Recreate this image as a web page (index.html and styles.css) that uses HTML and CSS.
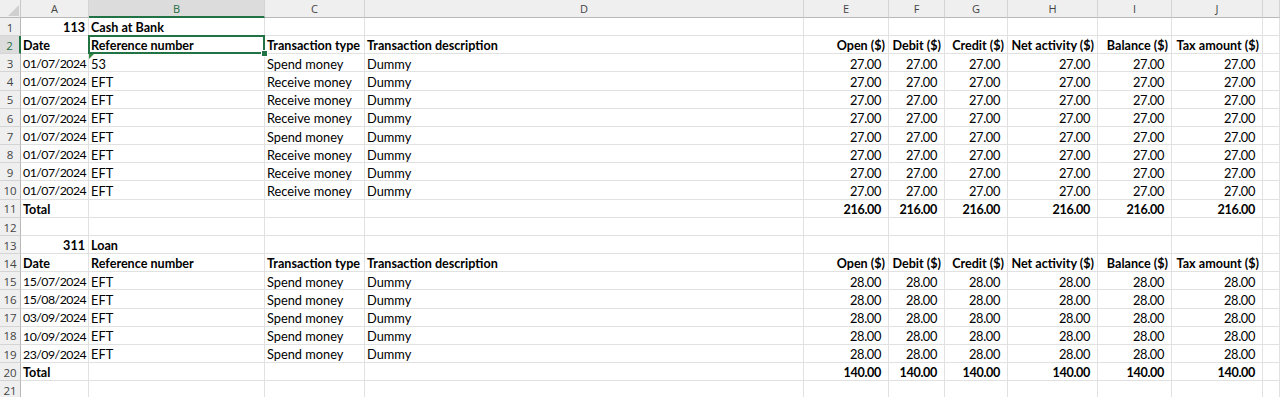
FILE: index.html
```html
<!DOCTYPE html>
<html>
<head>
<meta charset="utf-8">
<link rel="stylesheet" href="styles.css">
</head>
<body>
<div class="sheet">
  <div class="row hdr">
    <div class="corner"><svg width="12" height="12" viewBox="0 0 12 12"><polygon points="12,1 12,12 1,12" fill="#cfcfcf"/></svg></div>
    <div class="ch">A</div><div class="ch sel">B</div><div class="ch">C</div><div class="ch">D</div><div class="ch">E</div><div class="ch">F</div><div class="ch">G</div><div class="ch">H</div><div class="ch">I</div><div class="ch">J</div><div class="ch"></div>
  </div>

  <div class="row"><div class="rh">1</div><div class="c r b">113</div><div class="c b">Cash at Bank</div><div class="c"></div><div class="c"></div><div class="c"></div><div class="c"></div><div class="c"></div><div class="c"></div><div class="c"></div><div class="c"></div><div class="c"></div></div>
  <div class="row"><div class="rh rsel">2</div><div class="c b">Date</div><div class="c b active">Reference number</div><div class="c b">Transaction type</div><div class="c b">Transaction description</div><div class="c b r">Open ($)</div><div class="c b r">Debit ($)</div><div class="c b r">Credit ($)</div><div class="c b r">Net activity ($)</div><div class="c b r">Balance ($)</div><div class="c b r">Tax amount ($)</div><div class="c"></div></div>
  <div class="row"><div class="rh">3</div><div class="c d">01/07/2024</div><div class="c warn">53</div><div class="c">Spend money</div><div class="c">Dummy</div><div class="c n">27.00</div><div class="c n">27.00</div><div class="c n">27.00</div><div class="c n">27.00</div><div class="c n">27.00</div><div class="c n">27.00</div><div class="c"></div></div>
  <div class="row"><div class="rh">4</div><div class="c d">01/07/2024</div><div class="c">EFT</div><div class="c">Receive money</div><div class="c">Dummy</div><div class="c n">27.00</div><div class="c n">27.00</div><div class="c n">27.00</div><div class="c n">27.00</div><div class="c n">27.00</div><div class="c n">27.00</div><div class="c"></div></div>
  <div class="row"><div class="rh">5</div><div class="c d">01/07/2024</div><div class="c">EFT</div><div class="c">Receive money</div><div class="c">Dummy</div><div class="c n">27.00</div><div class="c n">27.00</div><div class="c n">27.00</div><div class="c n">27.00</div><div class="c n">27.00</div><div class="c n">27.00</div><div class="c"></div></div>
  <div class="row"><div class="rh">6</div><div class="c d">01/07/2024</div><div class="c">EFT</div><div class="c">Receive money</div><div class="c">Dummy</div><div class="c n">27.00</div><div class="c n">27.00</div><div class="c n">27.00</div><div class="c n">27.00</div><div class="c n">27.00</div><div class="c n">27.00</div><div class="c"></div></div>
  <div class="row"><div class="rh">7</div><div class="c d">01/07/2024</div><div class="c">EFT</div><div class="c">Spend money</div><div class="c">Dummy</div><div class="c n">27.00</div><div class="c n">27.00</div><div class="c n">27.00</div><div class="c n">27.00</div><div class="c n">27.00</div><div class="c n">27.00</div><div class="c"></div></div>
  <div class="row"><div class="rh">8</div><div class="c d">01/07/2024</div><div class="c">EFT</div><div class="c">Receive money</div><div class="c">Dummy</div><div class="c n">27.00</div><div class="c n">27.00</div><div class="c n">27.00</div><div class="c n">27.00</div><div class="c n">27.00</div><div class="c n">27.00</div><div class="c"></div></div>
  <div class="row"><div class="rh">9</div><div class="c d">01/07/2024</div><div class="c">EFT</div><div class="c">Receive money</div><div class="c">Dummy</div><div class="c n">27.00</div><div class="c n">27.00</div><div class="c n">27.00</div><div class="c n">27.00</div><div class="c n">27.00</div><div class="c n">27.00</div><div class="c"></div></div>
  <div class="row"><div class="rh">10</div><div class="c d">01/07/2024</div><div class="c">EFT</div><div class="c">Receive money</div><div class="c">Dummy</div><div class="c n">27.00</div><div class="c n">27.00</div><div class="c n">27.00</div><div class="c n">27.00</div><div class="c n">27.00</div><div class="c n">27.00</div><div class="c"></div></div>
  <div class="row"><div class="rh">11</div><div class="c b">Total</div><div class="c"></div><div class="c"></div><div class="c"></div><div class="c n b">216.00</div><div class="c n b">216.00</div><div class="c n b">216.00</div><div class="c n b">216.00</div><div class="c n b">216.00</div><div class="c n b">216.00</div><div class="c"></div></div>
  <div class="row"><div class="rh">12</div><div class="c"></div><div class="c"></div><div class="c"></div><div class="c"></div><div class="c"></div><div class="c"></div><div class="c"></div><div class="c"></div><div class="c"></div><div class="c"></div><div class="c"></div></div>
  <div class="row"><div class="rh">13</div><div class="c r b">311</div><div class="c b">Loan</div><div class="c"></div><div class="c"></div><div class="c"></div><div class="c"></div><div class="c"></div><div class="c"></div><div class="c"></div><div class="c"></div><div class="c"></div></div>
  <div class="row"><div class="rh">14</div><div class="c b">Date</div><div class="c b">Reference number</div><div class="c b">Transaction type</div><div class="c b">Transaction description</div><div class="c b r">Open ($)</div><div class="c b r">Debit ($)</div><div class="c b r">Credit ($)</div><div class="c b r">Net activity ($)</div><div class="c b r">Balance ($)</div><div class="c b r">Tax amount ($)</div><div class="c"></div></div>
  <div class="row"><div class="rh">15</div><div class="c d">15/07/2024</div><div class="c">EFT</div><div class="c">Spend money</div><div class="c">Dummy</div><div class="c n">28.00</div><div class="c n">28.00</div><div class="c n">28.00</div><div class="c n">28.00</div><div class="c n">28.00</div><div class="c n">28.00</div><div class="c"></div></div>
  <div class="row"><div class="rh">16</div><div class="c d">15/08/2024</div><div class="c">EFT</div><div class="c">Spend money</div><div class="c">Dummy</div><div class="c n">28.00</div><div class="c n">28.00</div><div class="c n">28.00</div><div class="c n">28.00</div><div class="c n">28.00</div><div class="c n">28.00</div><div class="c"></div></div>
  <div class="row"><div class="rh">17</div><div class="c d">03/09/2024</div><div class="c">EFT</div><div class="c">Spend money</div><div class="c">Dummy</div><div class="c n">28.00</div><div class="c n">28.00</div><div class="c n">28.00</div><div class="c n">28.00</div><div class="c n">28.00</div><div class="c n">28.00</div><div class="c"></div></div>
  <div class="row"><div class="rh">18</div><div class="c d">10/09/2024</div><div class="c">EFT</div><div class="c">Spend money</div><div class="c">Dummy</div><div class="c n">28.00</div><div class="c n">28.00</div><div class="c n">28.00</div><div class="c n">28.00</div><div class="c n">28.00</div><div class="c n">28.00</div><div class="c"></div></div>
  <div class="row"><div class="rh">19</div><div class="c d">23/09/2024</div><div class="c">EFT</div><div class="c">Spend money</div><div class="c">Dummy</div><div class="c n">28.00</div><div class="c n">28.00</div><div class="c n">28.00</div><div class="c n">28.00</div><div class="c n">28.00</div><div class="c n">28.00</div><div class="c"></div></div>
  <div class="row"><div class="rh">20</div><div class="c b">Total</div><div class="c"></div><div class="c"></div><div class="c"></div><div class="c n b">140.00</div><div class="c n b">140.00</div><div class="c n b">140.00</div><div class="c n b">140.00</div><div class="c n b">140.00</div><div class="c n b">140.00</div><div class="c"></div></div>
  <div class="row"><div class="rh">21</div><div class="c"></div><div class="c"></div><div class="c"></div><div class="c"></div><div class="c"></div><div class="c"></div><div class="c"></div><div class="c"></div><div class="c"></div><div class="c"></div><div class="c"></div></div>
</div>
</body>
</html>
```

FILE: styles.css
```css
html, body {
  margin: 0;
  padding: 0;
  background: #ffffff;
  overflow: hidden;
}
.sheet {
  font-family: Lato, "Open Sans", sans-serif;
  font-size: 12.8px;
  color: #000;
  width: 1280px;
}
.row {
  display: grid;
  grid-template-columns: 21px 68px 176px 100px 439px 85px 56px 63px 90px 74px 91px 1fr;
  height: 18.17px;
}
.row.hdr {
  height: 18px;
}
.corner {
  background: #efefef;
  border-right: 1px solid #c8c8c8;
  border-bottom: 1px solid #b8b8b8;
  box-sizing: border-box;
  display: flex;
  align-items: flex-end;
  justify-content: flex-end;
  padding: 0 1px 1px 0;
}
.corner svg {
  display: block;
}
.ch {
  background: #efefef;
  border-right: 1px solid #d4d4d4;
  border-bottom: 1px solid #b8b8b8;
  box-sizing: border-box;
  color: #444;
  font-family: "Open Sans", Lato, sans-serif;
  font-size: 11px;
  display: flex;
  align-items: center;
  justify-content: center;
  line-height: 1;
}
.ch.sel {
  background: #dcdcdc;
  color: #1e6e42;
  border-bottom: 2px solid #217346;
}
.rh {
  background: #efefef;
  border-right: 1px solid #b8b8b8;
  border-bottom: 1px solid #d4d4d4;
  box-sizing: border-box;
  color: #444;
  font-family: "Open Sans", Lato, sans-serif;
  font-size: 11.5px;
  display: flex;
  align-items: center;
  justify-content: center;
  line-height: 1;
  padding-top: 2px;
}
.rh.rsel {
  background: #dcdcdc;
  color: #1e6e42;
  border-right: 2px solid #217346;
}
.c {
  border-right: 1px solid #e1e1e1;
  border-bottom: 1px solid #e1e1e1;
  box-sizing: border-box;
  padding: 3px 2px 0 2px;
  white-space: nowrap;
  display: flex;
  align-items: center;
  line-height: 1;
  position: relative;
}
.c.r {
  justify-content: flex-end;
  padding-right: 3px;
}
.c.n {
  justify-content: flex-end;
  padding-right: 7px;
  letter-spacing: -0.35px;
}
.c.d {
  font-size: 12.3px;
  letter-spacing: -0.5px;
}
.c.b {
  font-weight: bold;
  font-size: 12.6px;
  padding-top: 4px;
}
.c.active::after {
  content: "";
  position: absolute;
  left: -1px;
  top: -1px;
  right: -1px;
  bottom: -1px;
  border: 2px solid #217346;
  z-index: 2;
}
.c.active::before {
  content: "";
  position: absolute;
  right: -4px;
  bottom: -4px;
  width: 5px;
  height: 5px;
  background: #217346;
  border: 1px solid #fff;
  z-index: 3;
}
.c.warn::before {
  content: "";
  position: absolute;
  left: 0;
  top: 0;
  width: 0;
  height: 0;
  border-top: 5px solid #2e8b3e;
  border-right: 5px solid transparent;
}
```
